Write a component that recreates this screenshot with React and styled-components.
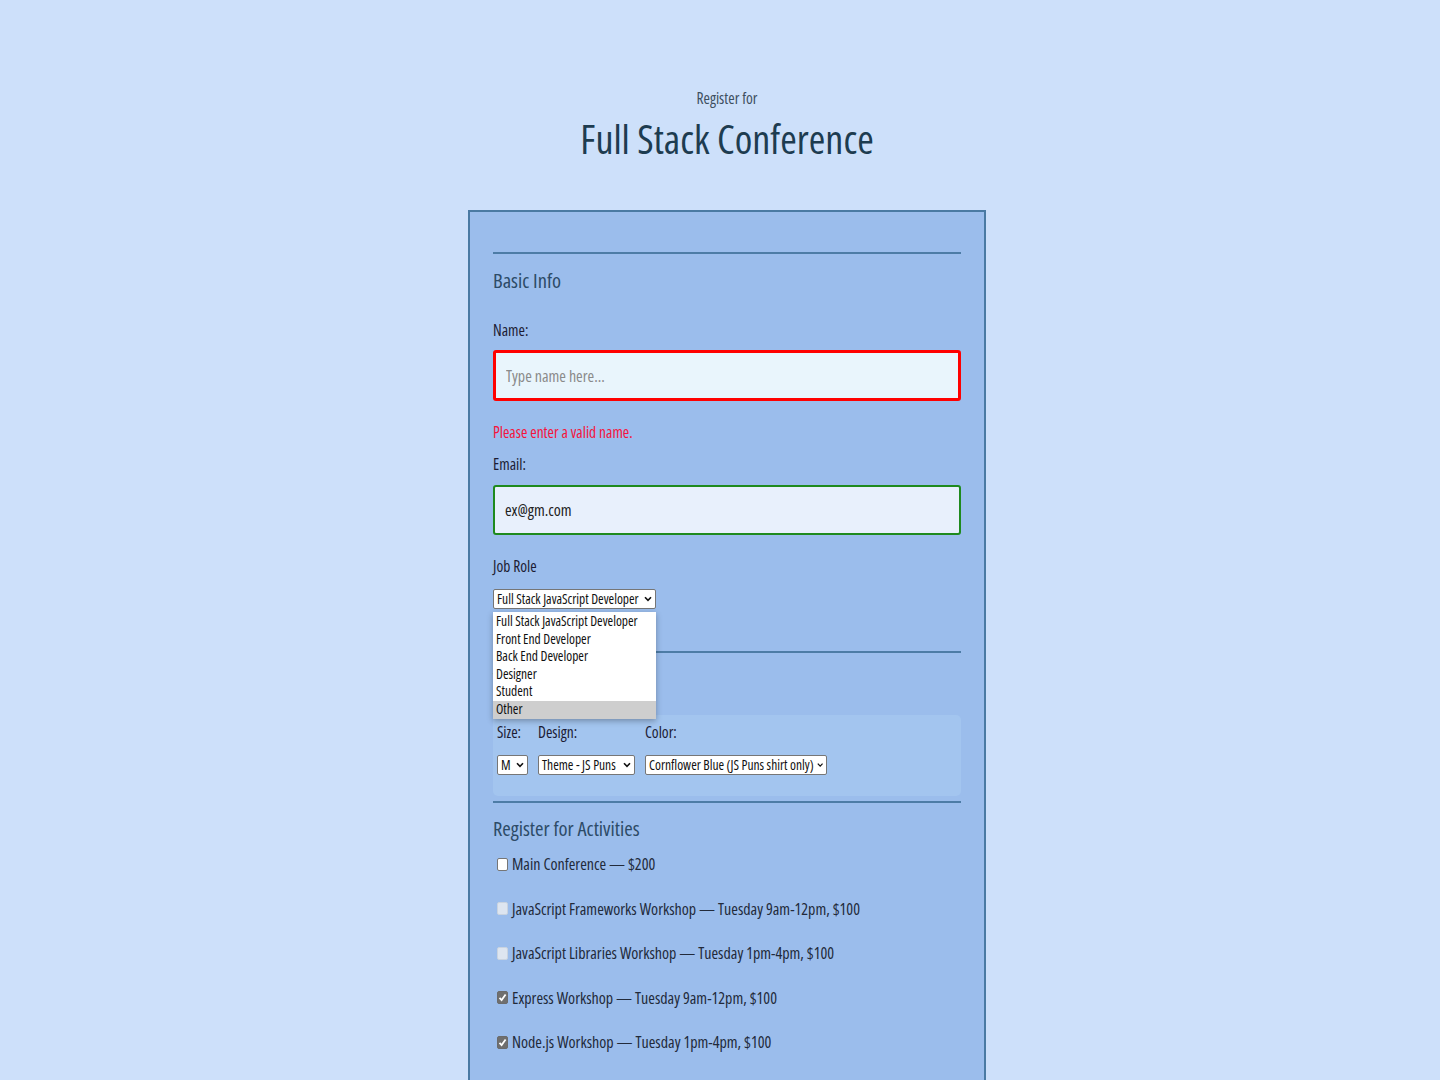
import styled, { createGlobalStyle } from "styled-components";

const GlobalStyle = createGlobalStyle`
  body {
    margin: 0;
    background: #cde0fa;
    font-family: "Open Sans", "Lato", sans-serif;
    font-stretch: 80%;
  }
`;

const Page = styled.div`
  padding: 88px 0 60px 14px;
`;

const Header = styled.header`
  text-align: center;
`;

const Kicker = styled.p`
  margin: 0;
  font-size: 15.5px;
  line-height: 20px;
  color: #3d4f5f;
`;

const Title = styled.h1`
  margin: 6px 0 0;
  font-stretch: 75%;
  font-weight: 400;
  font-size: 40px;
  line-height: 50px;
  color: #1d3c50;
`;

const Form = styled.form`
  width: 518px;
  margin: 46px auto 0;
  padding: 0 23px;
  box-sizing: border-box;
  background: #9bbdec;
  border: 2px solid #4a7aa3;
`;

const Section = styled.fieldset`
  margin: ${(p) => p.$top}px 0 0;
  padding: 0;
  border: 0;
  border-top: 2px solid #4d7ca6;
  min-width: 0;
`;

const Legend = styled.h2`
  margin: ${(p) => p.$top ?? 13}px 0 0;
  font-stretch: 75%;
  font-weight: 400;
  font-size: 20.5px;
  line-height: 26px;
  color: #2d4b67;
`;

const Label = styled.label`
  display: block;
  margin-top: ${(p) => p.$top}px;
  font-size: 15.5px;
  line-height: 20px;
  color: #1c1c34;
`;

const TextInput = styled.input`
  display: block;
  width: 100%;
  box-sizing: border-box;
  margin-top: ${(p) => p.$top}px;
  height: ${(p) => (p.$invalid ? 51 : 50)}px;
  padding: 0 10px;
  border: ${(p) => (p.$invalid ? "3px solid #ff0000" : "2px solid #1e8a1e")};
  border-radius: 3px;
  background: ${(p) => (p.$invalid ? "#e9f5fc" : "#e8f0fc")};
  font-family: inherit;
  font-stretch: 75%;
  font-size: 16px;
  color: #222;
  outline: none;

  &::placeholder {
    color: #8a8a8a;
  }
`;

const ErrorText = styled.p`
  margin: 21px 0 0;
  font-size: 15.5px;
  font-stretch: 81%;
  line-height: 20px;
  color: #f5143c;
`;

const SelectWrap = styled.div`
  position: relative;
  margin-top: ${(p) => p.$top ?? 0}px;
  width: ${(p) => p.$w}px;
`;

const FakeSelect = styled.div`
  display: flex;
  align-items: center;
  justify-content: space-between;
  gap: 3px;
  height: 20px;
  box-sizing: border-box;
  padding: 0 3px;
  background: #fff;
  border: 1px solid #767676;
  border-radius: 2px;
  font-size: 13.5px;
  font-stretch: 78%;
  color: #111;
  white-space: nowrap;
  overflow: hidden;
`;

const Chevron = () => (
  <svg width="8" height="6" viewBox="0 0 8 6">
    <path d="M1 1.2 L4 4.4 L7 1.2" fill="none" stroke="#111" strokeWidth="1.6" />
  </svg>
);

const Dropdown = styled.ul`
  position: absolute;
  left: 0;
  top: 23px;
  width: 163px;
  margin: 0;
  padding: 1px 0 0;
  list-style: none;
  background: #fff;
  box-shadow: 0 2px 6px rgba(0, 0, 0, 0.3);
  z-index: 5;
`;

const Option = styled.li`
  height: 17.6px;
  line-height: 17.6px;
  padding-left: 3px;
  font-size: 13.5px;
  font-stretch: 75%;
  color: #111;
  white-space: nowrap;
  background: ${(p) => (p.$active ? "#cecece" : "#fff")};
`;

const ShirtBox = styled.div`
  margin-top: 23px;
  height: 81px;
  box-sizing: border-box;
  padding: 7px 4px 0;
  background: #a3c5ef;
  border-radius: 5px;
  display: flex;
  gap: 10px;
`;

const ShirtField = styled.div`
  display: flex;
  flex-direction: column;
  gap: 13px;
`;

const Activity = styled.label`
  display: flex;
  align-items: center;
  gap: 4px;
  margin-top: ${(p) => p.$top}px;
  padding-left: 4px;
  font-size: 16px;
  font-stretch: 82%;
  line-height: 20px;
  color: #222a3a;
`;

const Box = styled.span`
  width: 11px;
  height: 13px;
  box-sizing: border-box;
  border-radius: 2px;
  border: 1px solid ${(p) => (p.$state === "checked" ? "#6b6b6b" : p.$state === "disabled" ? "#c9d3e0" : "#767676")};
  background: ${(p) => (p.$state === "checked" ? "#6f6f6f" : p.$state === "disabled" ? "#dde5f0" : "#fff")};
  display: flex;
  align-items: center;
  justify-content: center;
`;

const Tick = () => (
  <svg width="9" height="9" viewBox="0 0 9 9">
    <path d="M1.5 4.8 L3.6 7 L7.6 1.5" fill="none" stroke="#fff" strokeWidth="1.8" />
  </svg>
);

const roles = [
  "Full Stack JavaScript Developer",
  "Front End Developer",
  "Back End Developer",
  "Designer",
  "Student",
  "Other",
];

const activities = [
  { text: "Main Conference — $200", state: "" },
  { text: "JavaScript Frameworks Workshop — Tuesday 9am-12pm, $100", state: "disabled" },
  { text: "JavaScript Libraries Workshop — Tuesday 1pm-4pm, $100", state: "disabled" },
  { text: "Express Workshop — Tuesday 9am-12pm, $100", state: "checked" },
  { text: "Node.js Workshop — Tuesday 1pm-4pm, $100", state: "checked" },
  { text: "Build tools Workshop — Wednesday 9am-12pm, $100", state: "" },
];

const App = () => {
  return (
    <Page>
      <GlobalStyle />
      <Header>
        <Kicker>Register for</Kicker>
        <Title>Full Stack Conference</Title>
      </Header>

      <Form>
        <Section $top={40}>
          <Legend>Basic Info</Legend>
          <Label $top={27}>Name:</Label>
          <TextInput $top={10} $invalid placeholder="Type name here..." />
          <ErrorText>Please enter a valid name.</ErrorText>
          <Label $top={12}>Email:</Label>
          <TextInput $top={11} defaultValue="ex@gm.com" />
          <Label $top={21}>Job Role</Label>
          <SelectWrap $top={13} $w={163}>
            <FakeSelect>
              Full Stack JavaScript Developer <Chevron />
            </FakeSelect>
            <Dropdown>
              {roles.map((r) => (
                <Option key={r} $active={r === "Other"}>
                  {r}
                </Option>
              ))}
            </Dropdown>
          </SelectWrap>
        </Section>

        <Section $top={42}>
          <Legend>T-Shirt Info</Legend>
          <ShirtBox>
            <ShirtField>
              <Label $top={0}>Size:</Label>
              <SelectWrap $w={31}>
                <FakeSelect>
                  M <Chevron />
                </FakeSelect>
              </SelectWrap>
            </ShirtField>
            <ShirtField>
              <Label $top={0}>Design:</Label>
              <SelectWrap $w={97}>
                <FakeSelect>
                  Theme - JS Puns <Chevron />
                </FakeSelect>
              </SelectWrap>
            </ShirtField>
            <ShirtField>
              <Label $top={0}>Color:</Label>
              <SelectWrap $w={182}>
                <FakeSelect>
                  Cornflower Blue (JS Puns shirt only) <Chevron />
                </FakeSelect>
              </SelectWrap>
            </ShirtField>
          </ShirtBox>
        </Section>

        <Section $top={5}>
          <Legend $top={12}>Register for Activities</Legend>
          {activities.map((a, i) => (
            <Activity key={a.text} $top={i === 0 ? 13 : 24.6}>
              <Box $state={a.state}>{a.state === "checked" && <Tick />}</Box>
              {a.text}
            </Activity>
          ))}
        </Section>
      </Form>
    </Page>
  );
};

export default App;
